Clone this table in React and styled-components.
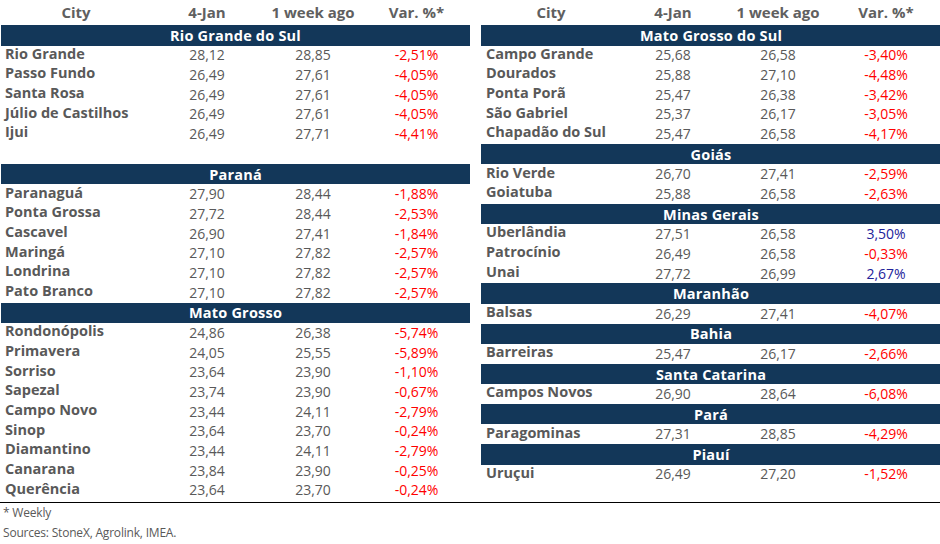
import React from "react"
import styled, { createGlobalStyle } from "styled-components"

const GlobalStyle = createGlobalStyle`
  body {
    margin: 0;
    background: #fff;
    font-family: "Open Sans", "Liberation Sans", sans-serif;
  }
`

const NAVY = "#133759"
const GRAY = "#595959"

const Page = styled.div`
  width: 940px;
  height: 544px;
  overflow: hidden;
`

const Tables = styled.div`
  display: grid;
  grid-template-columns: 469px 460px;
  column-gap: 11px;
  padding-left: 1px;
  height: 503px;
  box-sizing: border-box;
  border-bottom: 1.5px solid #000;
  margin-right: -1px;
`

const Table = styled.div`
  display: flex;
  flex-direction: column;
`

const Row = styled.div`
  display: grid;
  grid-template-columns: ${({ cols }) => cols};
  height: ${({ h }) => h}px;
  align-items: center;
  font-size: 14px;
  line-height: 1;
  color: ${GRAY};
`

const HeadCell = styled.div`
  text-align: center;
  font-weight: 700;
  font-size: 15px;
  color: #606060;
`

const CityCell = styled.div`
  font-weight: 700;
  font-size: 14.5px;
  padding-left: ${({ pad }) => pad}px;
  margin-top: -3px;
  white-space: nowrap;
`

const NumCell = styled.div`
  text-align: center;
  color: ${({ tone }) => (tone === "up" ? "#22229a" : tone === "down" ? "#ff0000" : GRAY)};
`

const StateBar = styled.div`
  height: 20.5px;
  background: ${NAVY};
  color: #fff;
  font-weight: 700;
  font-size: 14.5px;
  display: flex;
  align-items: center;
  justify-content: center;
  letter-spacing: 0.2px;
`

const Spacer = styled.div`
  height: 20px;
`

const Footer = styled.div`
  padding: 0 0 0 3px;
  font-size: 12px;
  color: ${GRAY};
  line-height: 20px;
  letter-spacing: -0.2px;
`

const LEFT_COLS = "150px 112px 100px 107px"
const RIGHT_COLS = "140px 104px 106px 110px"

const left = [
  {
    state: "Rio Grande do Sul",
    rows: [
      ["Rio Grande", "28,12", "28,85", "-2,51%"],
      ["Passo Fundo", "26,49", "27,61", "-4,05%"],
      ["Santa Rosa", "26,49", "27,61", "-4,05%"],
      ["Júlio de Castilhos", "26,49", "27,61", "-4,05%"],
      ["Ijui", "26,49", "27,71", "-4,41%"],
    ],
    gapAfter: true,
  },
  {
    state: "Paraná",
    rows: [
      ["Paranaguá", "27,90", "28,44", "-1,88%"],
      ["Ponta Grossa", "27,72", "28,44", "-2,53%"],
      ["Cascavel", "26,90", "27,41", "-1,84%"],
      ["Maringá", "27,10", "27,82", "-2,57%"],
      ["Londrina", "27,10", "27,82", "-2,57%"],
      ["Pato Branco", "27,10", "27,82", "-2,57%"],
    ],
  },
  {
    state: "Mato Grosso",
    rows: [
      ["Rondonópolis", "24,86", "26,38", "-5,74%"],
      ["Primavera", "24,05", "25,55", "-5,89%"],
      ["Sorriso", "23,64", "23,90", "-1,10%"],
      ["Sapezal", "23,74", "23,90", "-0,67%"],
      ["Campo Novo", "23,44", "24,11", "-2,79%"],
      ["Sinop", "23,64", "23,70", "-0,24%"],
      ["Diamantino", "23,44", "24,11", "-2,79%"],
      ["Canarana", "23,84", "23,90", "-0,25%"],
      ["Querência", "23,64", "23,70", "-0,24%"],
    ],
  },
]

const right = [
  {
    state: "Mato Grosso do Sul",
    rows: [
      ["Campo Grande", "25,68", "26,58", "-3,40%"],
      ["Dourados", "25,88", "27,10", "-4,48%"],
      ["Ponta Porã", "25,47", "26,38", "-3,42%"],
      ["São Gabriel", "25,37", "26,17", "-3,05%"],
      ["Chapadão do Sul", "25,47", "26,58", "-4,17%"],
    ],
  },
  {
    state: "Goiás",
    rows: [
      ["Rio Verde", "26,70", "27,41", "-2,59%"],
      ["Goiatuba", "25,88", "26,58", "-2,63%"],
    ],
  },
  {
    state: "Minas Gerais",
    rows: [
      ["Uberlândia", "27,51", "26,58", "3,50%"],
      ["Patrocínio", "26,49", "26,58", "-0,33%"],
      ["Unai", "27,72", "26,99", "2,67%"],
    ],
  },
  { state: "Maranhão", rows: [["Balsas", "26,29", "27,41", "-4,07%"]] },
  { state: "Bahia", rows: [["Barreiras", "25,47", "26,17", "-2,66%"]] },
  { state: "Santa Catarina", rows: [["Campos Novos", "26,90", "28,64", "-6,08%"]] },
  { state: "Pará", rows: [["Paragominas", "27,31", "28,85", "-4,29%"]] },
  { state: "Piauí", rows: [["Uruçui", "26,49", "27,20", "-1,52%"]] },
]

const PriceTable = ({ groups, cols, cityPad }) => (
  <Table>
    <Row cols={cols} h={25}>
      <HeadCell>City</HeadCell>
      <HeadCell>4-Jan</HeadCell>
      <HeadCell>1 week ago</HeadCell>
      <HeadCell>Var. %*</HeadCell>
    </Row>
    {groups.map(g => (
      <React.Fragment key={g.state}>
        <StateBar>{g.state}</StateBar>
        {g.rows.map(([city, now, ago, v]) => (
          <Row cols={cols} h={19.7} key={city}>
            <CityCell pad={cityPad}>{city}</CityCell>
            <NumCell>{now}</NumCell>
            <NumCell>{ago}</NumCell>
            <NumCell tone={v.startsWith("-") ? "down" : "up"}>{v}</NumCell>
          </Row>
        ))}
        {g.gapAfter && <Spacer />}
      </React.Fragment>
    ))}
  </Table>
)

export default function App() {
  return (
    <Page>
      <GlobalStyle />
      <Tables>
        <PriceTable groups={left} cols={LEFT_COLS} cityPad={4} />
        <PriceTable groups={right} cols={RIGHT_COLS} cityPad={5} />
      </Tables>
      <Footer>
        <div>* Weekly</div>
        <div>Sources: StoneX, Agrolink, IMEA.</div>
      </Footer>
    </Page>
  )
}
